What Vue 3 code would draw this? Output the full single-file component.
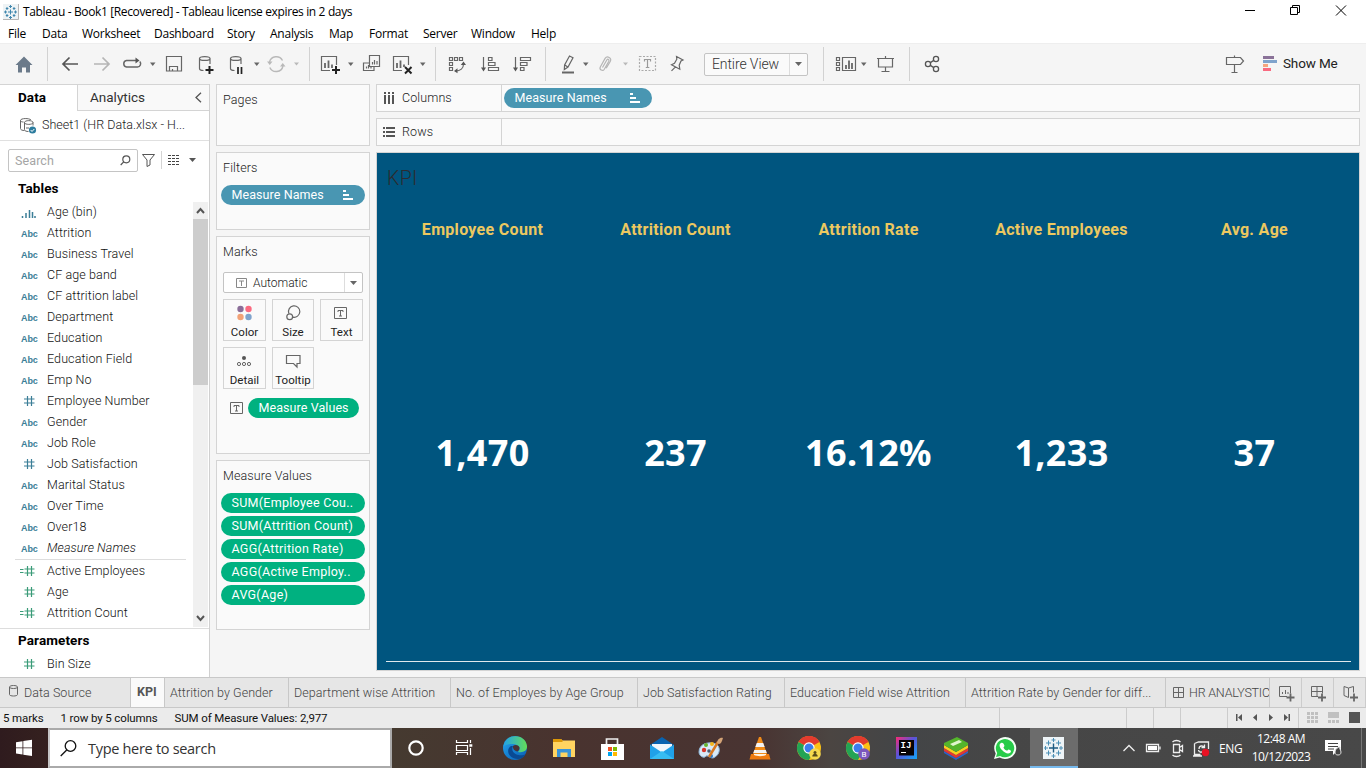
<script setup>
const menus = [
  { t: 'File', w: 34 }, { t: 'Data', w: 40 }, { t: 'Worksheet', w: 72 }, { t: 'Dashboard', w: 73 },
  { t: 'Story', w: 43 }, { t: 'Analysis', w: 59 }, { t: 'Map', w: 40 }, { t: 'Format', w: 54 },
  { t: 'Server', w: 48 }, { t: 'Window', w: 60 }, { t: 'Help', w: 40 },
]
const dims = [
  ['bin', 'Age (bin)'], ['abc', 'Attrition'], ['abc', 'Business Travel'], ['abc', 'CF age band'],
  ['abc', 'CF attrition label'], ['abc', 'Department'], ['abc', 'Education'], ['abc', 'Education Field'],
  ['abc', 'Emp No'], ['num', 'Employee Number'], ['abc', 'Gender'], ['abc', 'Job Role'],
  ['num', 'Job Satisfaction'], ['abc', 'Marital Status'], ['abc', 'Over Time'], ['abc', 'Over18'],
  ['abc', 'Measure Names', true],
]
const measures = [['calc', 'Active Employees'], ['mnum', 'Age'], ['calc', 'Attrition Count']]
const values = ['SUM(Employee Cou..', 'SUM(Attrition Count)', 'AGG(Attrition Rate)', 'AGG(Active Employ..', 'AVG(Age)']
const kpis = [
  ['Employee Count', '1,470'], ['Attrition Count', '237'], ['Attrition Rate', '16.12%'],
  ['Active Employees', '1,233'], ['Avg. Age', '37'],
]
const sheets = [
  { t: 'Attrition by Gender', w: 124 }, { t: 'Department wise Attrition', w: 162 },
  { t: 'No. of Employes by Age Group', w: 187 }, { t: 'Job Satisfaction Rating', w: 147 },
  { t: 'Education Field wise Attrition', w: 181 }, { t: 'Attrition Rate by Gender for diff...', w: 200 },
]
</script>

<template>
  <div class="window">
    <header class="titlebar">
      <svg class="logo" width="16" height="16" viewBox="0 0 16 16">
        <rect width="16" height="16" fill="#eef3f5" /><path d="M15.5 0v15.5H0" fill="none" stroke="#b5b5b5" />
        <path d="M7.5 5.5v5M5 8h5M7.5 1v3M6 2.5h3M7.5 12v3M6 13.5h3M1 8h3M2.5 6.5v3M11 8h3M12.5 6.5v3M4 3v3M2.8 4.5h2.6M11 3v3M9.8 4.5h2.6M4 10v3M2.8 11.5h2.6M11 10v3M9.8 11.5h2.6" stroke="#3f86ad" fill="none" />
      </svg>
      <span class="title">Tableau - Book1 [Recovered] - Tableau license expires in 2 days</span>
      <svg class="winctl" width="110" height="23" viewBox="1240 0 110 23" fill="none" stroke="#000">
        <path d="M1245 10.5h10" /><path d="M1290.500 7.500h7v7h-7zM1292.500 7v-1.500h7v7h-1.500" /><path d="M1336 5.500l10 10M1346 5.500l-10 10" />
      </svg>
    </header>
    <nav class="menubar"><span v-for="m in menus" :key="m.t" :style="{ width: m.w + 'px' }">{{ m.t }}</span></nav>

    <div class="toolbar">
      <svg width="47" height="40" viewBox="0 44 47 40"><path d="M24 56.500l8.500 8.500h-2.500v7.500h-4v-5h-4v5h-4V65h-2.500z" fill="#6b7a8a" /></svg>
      <i class="sep"></i>
      <svg width="261" height="40" viewBox="48 44 261 40" fill="none" stroke="#666" stroke-width="1.200">
        <path d="M63 64h15M69.500 57.500L63 64l6.500 6.500" stroke="#555" stroke-width="1.700" />
        <path d="M94 64h15M102.500 57.500L109 64l-6.500 6.500" stroke="#b5b5b5" stroke-width="1.700" />
        <path d="M137 60.500h-10.500a3.300 3.300 0 0 0 0 6.500h11a3.300 3.300 0 0 0 2.300-5.500" stroke-width="1.500" />
        <path d="M135.500 57.500l4 3-4 3z" fill="#555" stroke="none" />
        <path d="M150 62.500h5.500l-2.750 3.500z" fill="#666" stroke="none" />
        <path d="M166.500 56.500h15v14.500h-15zM169.500 71v-4.500h8v4.500M172.500 71v-2" />
        <path d="M210 64v-6M199.500 58.500v10c0 1.500 2 2 4 2M199.500 58.500c0-2.600 10.500-2.600 10.500 0s-10.500 2.600-10.500 0" />
        <path d="M209.500 66v8M205.500 70h8" stroke="#222" stroke-width="2" />
        <path d="M241 64v-6M230.500 58.500v10c0 1.500 2 2 4 2M230.500 58.500c0-2.600 10.500-2.600 10.500 0s-10.500 2.600-10.500 0" />
        <path d="M238 67v7M241.500 67v7" stroke="#222" stroke-width="1.700" />
        <path d="M254 62.500h5.500l-2.750 3.500z" fill="#666" stroke="none" />
        <g stroke="#b9b9b9" stroke-width="1.400"><path d="M269.500 62a7 7 0 0 1 13-1.500M283 66a7 7 0 0 1-13.200 1.500" /><path d="M267 61.500h5.500l-2.750 3.500zM280 66.500h5.500l-2.750-3.500z" fill="#b9b9b9" stroke="none" /></g>
        <path d="M294 62.500h5l-2.500 3z" fill="#b9b9b9" stroke="none" />
      </svg>
      <i class="sep"></i>
      <svg width="125" height="40" viewBox="310 44 125 40" fill="none" stroke="#666" stroke-width="1.200">
        <path d="M330 70.500h-8.500v-14h15v8.500" /><path d="M325 63v5M328.500 60.500v7.500M332 64.500V68" stroke-width="1.800" /><path d="M336 66v8M332 70h8" stroke="#222" stroke-width="2" />
        <path d="M348 62.500h5.500l-2.750 3.500z" fill="#666" stroke="none" />
        <path d="M369.500 63h-6v7.500h10.500v-4M369.500 55.500h10v11h-10z" /><path d="M366.500 66.500v2M368.500 65v3.500M371 67v1.500M372.500 62v2.500M374.500 60v4.500M377 61v3.500" />
        <path d="M402 70.500h-8.500v-14h15v8.500" /><path d="M397 63v5M400.500 60.500v7.500M404 64.500V67" stroke-width="1.800" /><path d="M405 67l6.500 6.500M411.500 67l-6.500 6.500" stroke="#222" stroke-width="2" />
        <path d="M420 62.500h5.500l-2.750 3.500z" fill="#666" stroke="none" />
      </svg>
      <i class="sep"></i>
      <svg width="109" height="40" viewBox="436 44 109 40" fill="none" stroke="#666" stroke-width="1.200">
        <path d="M449.500 57.500h3v3h-3zM454.500 57.500h3v3h-3zM459.500 57.500h3v3h-3zM449.500 62.500h3v3h-3zM449.500 67.500h3v3h-3zM463.500 64c0 4-3 7-8 7" />
        <path d="M460.800 65l2.700-3.500 2.500 3.500zM457.500 68.300v5L454 71z" fill="#555" stroke="none" />
        <path d="M483.500 57v12M488.500 57.500h3.500v3h-3.500zM488.500 62.500h6.500v3h-6.500zM488.500 67.500h10v3h-10z" /><path d="M481 67.500h5l-2.500 4z" fill="#555" stroke="none" />
        <path d="M515.500 57v12M520.500 57.500h10v3h-10zM520.500 62.500h6.500v3h-6.500zM520.500 67.500h3.500v3h-3.500z" /><path d="M513 67.500h5l-2.500 4z" fill="#555" stroke="none" />
      </svg>
      <i class="sep"></i>
      <svg width="158" height="40" viewBox="546 44 158 40" fill="none" stroke="#666" stroke-width="1.200">
        <path d="M569.500 56l3.500 1.700-5 9.300-3.700 2.500.3-4.500zM564.800 65l3 2" /><path d="M562 72.500h12" stroke-width="2" />
        <path d="M583 62.500h5.500l-2.750 3.500z" fill="#666" stroke="none" />
        <path d="M602.500 67.500l4.300-7.500c1-1.500 2.800-.4 2 1.200l-4.500 8c-1.500 2.500-5.300.5-4-2.300l4.800-8.500c2-3 7-.5 5.300 2.800l-4.200 7" stroke="#b5b5b5" />
        <path d="M623 62.500h5l-2.500 3z" fill="#b9b9b9" stroke="none" />
        <path d="M639.500 56.500h16v14h-16z" stroke="#aaa" stroke-dasharray="2 1.500" /><path d="M644.500 61.500v-2h6v2M647.500 59.500v8M645.800 67.500h3.500" stroke="#999" />
        <path d="M676.500 56.500l6.500 3.500-2 1-1.800 4.200.6 4-8.300-4.500 3-1.500 2.300-4zM675.500 66.800l-4 4" />
      </svg>
      <div class="combo"><span>Entire View</span><b><svg width="7" height="4"><path d="M0 0h7l-3.500 4z" fill="#666" /></svg></b></div>
      <i class="sep gap15"></i>
      <svg width="85" height="40" viewBox="824 44 85 40" fill="none" stroke="#666" stroke-width="1.200">
        <path d="M836.500 57.500h3v3h-3zM836.500 62.500h3v3h-3zM836.500 67.500h3v3h-3zM842.500 57.500h13v13h-13z" /><path d="M846 65v4M849 60.500V69M852 63v6" stroke-width="1.800" />
        <path d="M861 62.500h5.500l-2.750 3.500z" fill="#666" stroke="none" />
        <path d="M877 58.500h17M878.500 58.500v8.500h14v-8.500M885.500 56v2M885.500 67v4M881.500 71.500h8" />
      </svg>
      <i class="sep"></i>
      <svg width="40" height="40" viewBox="910 44 40 40" fill="none" stroke="#555" stroke-width="1.300">
        <circle cx="928" cy="64" r="2.600" /><circle cx="936" cy="59" r="2.600" /><circle cx="936" cy="69" r="2.600" /><path d="M930.300 62.600l3.500-2.200M930.300 65.400l3.500 2.200" />
      </svg>
      <div class="showme">
        <svg width="60" height="40" viewBox="1220 44 60 40"><path d="M1226.500 57.500h14l3 3.500-3 3.500h-14zM1234.500 55.500v2M1234.500 65v7.500M1231.500 72.500h6" fill="none" stroke="#666" stroke-width="1.200" /><path d="M1263 56h11v3h-11z" fill="#8a7298" /><path d="M1263 60h14v3h-14z" fill="#7fa3cc" /><path d="M1263 64h5v3h-5z" fill="#f5a57e" /><path d="M1263 68h8v3h-8z" fill="#f96a80" /></svg>
        <span>Show Me</span>
      </div>
    </div>

    <main class="work">
      <aside class="data">
        <div class="tabs"><b>Data</b><span>Analytics<svg width="7" height="11"><path d="M6 .7L1 5.500l5 4.800" fill="none" stroke="#555" stroke-width="1.300" /></svg></span></div>
        <div class="source">
          <svg width="18" height="18" viewBox="19 116 18 18" fill="none" stroke="#666"><path d="M20.500 119.500v8c0 1.500 2 2 4 2M20.500 119.500c0-2.500 9-2.500 10.500-.5M20.500 119.500c0 1 1.500 1.500 3 1.500M24.500 121.500v7c0 1.500 2 2 4 2M24.500 121.500c0-2.500 8.500-2.500 8.500 0s-8.500 2.500-8.500 0M33 121.500v3M26 127h3" /><circle cx="32.500" cy="129" r="3.600" fill="#2c7c9e" stroke="none" /><path d="M30.700 129l1.300 1.500 2.300-2.500" stroke="#fff" /></svg>
          <span>Sheet1 (HR Data.xlsx - H...</span>
        </div>
        <div class="searchrow">
          <div class="search"><span>Search</span><svg width="11" height="11" fill="none" stroke="#555" stroke-width="1.200"><circle cx="6.300" cy="4.300" r="3.500" /><path d="M3.700 6.800L.7 10" /></svg></div>
          <svg width="60" height="22" viewBox="139 149 60 22" fill="none" stroke="#555"><path d="M142.500 154.500h12l-4.500 5.500v5l-3 1.500v-6.500z" /><path d="M161.500 151v18" stroke="#d4d4d4" /><path d="M168 155.500h12M168 158.500h12M168 161.500h12M168 164.500h12" stroke-dasharray="3 1" stroke="#444" /><path d="M189 158h7l-3.500 4z" fill="#555" stroke="none" /></svg>
        </div>
        <h3>Tables</h3>
        <div class="fields">
          <div class="list">
            <div v-for="d in dims" :key="d[1]" class="row" :class="{ it: d[2] }">
              <em v-if="d[0] === 'abc'">Abc</em>
              <svg v-else-if="d[0] === 'bin'" width="16" height="12" stroke="#3b7e97" stroke-width="1.500"><path d="M1.500 12v-2M5 12V7M8.500 12V4M11.500 12V6M14 12v-2" /></svg>
              <svg v-else width="16" height="12" stroke="#3b7e97" stroke-width="1.200"><path d="M6.500 1v10M10.500 1v10M3 4h10.500M3 8h10.500" /></svg>
              <span>{{ d[1] }}</span>
            </div>
            <hr />
            <div v-for="d in measures" :key="d[1]" class="row">
              <svg width="16" height="12" stroke="#3a9b78" stroke-width="1.200"><path d="M6.500 1v10M10.500 1v10M3.500 4h10M3.500 8h10" /><path v-if="d[0] === 'calc'" d="M-1 4.500h3.500M-1 7.500h3.500" /></svg>
              <span>{{ d[1] }}</span>
            </div>
          </div>
          <div class="scroll"><svg width="15" height="17"><path d="M4 11l3.500-4 3.500 4" fill="none" stroke="#555" stroke-width="2" /></svg><i></i><svg width="15" height="17"><path d="M4 6l3.500 4L11 6" fill="none" stroke="#555" stroke-width="2" /></svg></div>
        </div>
        <div class="params">
          <h3>Parameters</h3>
          <div class="row"><svg width="16" height="12" stroke="#3a9b78" stroke-width="1.200"><path d="M6.500 1v10M10.500 1v10M3 4h10.500M3 8h10.500" /></svg><span>Bin Size</span></div>
        </div>
      </aside>

      <section class="cards">
        <div class="card pages"><h4>Pages</h4></div>
        <div class="card filters"><h4>Filters</h4><div class="pill blue"><span>Measure Names</span><svg width="11" height="10" fill="#fff"><path d="M0 0h3v2H0zM0 4h6v2H0zM0 8h10v2H0z" /></svg></div></div>
        <div class="card marks">
          <h4>Marks</h4>
          <div class="mtype"><svg width="11" height="10" fill="none" stroke="#888"><path d="M.5.5h10v9H.5zM3 3h5M5.500 3v5" /></svg><span>Automatic</span><b><svg width="7" height="4"><path d="M0 0h7l-3.500 4z" fill="#666" /></svg></b></div>
          <div class="btns">
            <div><svg width="42" height="22"><circle cx="16.500" cy="9" r="3.200" fill="#8a6d98" /><circle cx="24.500" cy="9" r="3.200" fill="#fb6a80" /><circle cx="16.500" cy="17" r="3.200" fill="#f2a277" /><circle cx="24.500" cy="17" r="3.200" fill="#7fa3cc" /></svg><span>Color</span></div>
            <div><svg width="42" height="22" fill="none" stroke="#666" stroke-width="1.200"><path d="M15.800 13.500a5.700 5.700 0 1 1 4 3.600" /><circle cx="16.700" cy="16.800" r="2.900" /></svg><span>Size</span></div>
            <div><svg width="42" height="22" fill="none" stroke="#666"><path d="M13.500 7.500h12v11h-12zM17 12v-1.500h5V12M19.500 10.500v5.500M18 16h3" /></svg><span>Text</span></div>
            <div><svg width="42" height="22" fill="none" stroke="#666"><circle cx="20" cy="10" r="2" fill="#555" stroke="none" /><circle cx="15" cy="16" r="1.600" /><circle cx="20" cy="16" r="1.600" /><circle cx="25" cy="16" r="1.600" /></svg><span>Detail</span></div>
            <div><svg width="42" height="22" fill="none" stroke="#666" stroke-width="1.200"><path d="M13.500 7.500h13.500v8h-3v3.500l-3.500-3.500h-7z" /></svg><span>Tooltip</span></div>
          </div>
          <div class="mline"><svg width="13" height="12" fill="none" stroke="#666"><path d="M.5.5h12v11H.5zM4 5V3.500h5V5M6.500 3.500V9M5 9h3" /></svg><div class="pill green"><span>Measure Values</span></div></div>
        </div>
        <div class="card mv"><h4>Measure Values</h4><div v-for="v in values" :key="v" class="pill green"><span>{{ v }}</span></div></div>
      </section>

      <section class="canvas">
        <div class="shelf"><label><svg width="12" height="12" fill="#555"><path d="M1 0h2v2H1zM5 0h2v2H5zM9 0h2v2H9zM1 3h2v9H1zM5 3h2v9H5zM9 3h2v9H9z" /></svg><span>Columns</span></label><div class="pill blue"><span>Measure Names</span><svg width="11" height="10" fill="#fff"><path d="M0 0h3v2H0zM0 4h6v2H0zM0 8h10v2H0z" /></svg></div></div>
        <div class="shelf"><label><svg width="12" height="12" fill="#555"><path d="M0 1h2v2H0zM3 1h9v2H3zM0 5h2v2H0zM3 5h9v2H3zM0 9h2v2H0zM3 9h9v2H3z" /></svg><span>Rows</span></label></div>
        <div class="view">
          <h2>KPI</h2>
          <div class="grid"><div v-for="k in kpis" :key="k[0]"><h5>{{ k[0] }}</h5><strong>{{ k[1] }}</strong></div></div>
        </div>
      </section>
    </main>

    <div class="sheets">
      <div class="tab src"><svg width="10" height="12" fill="none" stroke="#666"><path d="M.5 2v7.500c0 2 8 2 8 0V2M.5 2c0-2 8-2 8 0s-8 2-8 0" /></svg>Data Source</div>
      <div class="tab on">KPI</div>
      <div v-for="s in sheets" :key="s.t" class="tab" :style="{ width: s.w + 'px' }">{{ s.t }}</div>
      <div class="tab hr"><svg width="11" height="11" fill="none" stroke="#666"><path d="M.5.500h10v10H.500zM5.500.500v10M.500 5.500h10" /></svg>HR ANALYSTIC</div>
      <svg class="add" width="96" height="29" viewBox="1270 678 96 29" fill="none" stroke="#666"><path d="M1287 696.500h-7.500v-10h11v7M1282.500 692v2M1285.500 690v4M1288 692v2" /><path d="M1286.500 697.500h8M1290.500 693.500v8M1318 697.500h8M1322 693.500v8M1350 697.500h8M1354 693.500v8" stroke-width="1.800" /><path d="M1318 696.500h-6.500v-10h11v7M1311.500 691.500h11M1317 686.500v10" /><path d="M1348.500 688l-4.500-1.500v9l4.500 2v-9.500l5-1.500v6" /><path d="M1301.500 678v29M1333.500 678v29M1365.500 678v29" stroke="#ccc" /></svg>
    </div>
    <div class="status">
      <span>5 marks</span><span>1 row by 5 columns</span><span>SUM of Measure Values: 2,977</span>
      <svg width="376" height="20" viewBox="990 708 376 20" fill="#555"><path d="M999.500 708v20M1126.500 708v20M1153.500 708v20M1180.500 708v20M1227.500 708v20M1298.500 708v20" stroke="#ccc" /><path d="M1236 714h1.500v7h-1.500zM1242 714v7l-4-3.500zM1257 714v7l-4-3.500zM1269 714v7l4-3.500zM1284 714v7l4-3.500zM1288.500 714h1.500v7h-1.500z" /><path d="M1307 712h3v3h-3zM1311 712h3v3h-3zM1315 712h3v3h-3zM1307 716h3v3h-3zM1311 716h3v3h-3zM1315 716h3v3h-3zM1307 720h3v3h-3zM1311 720h3v3h-3zM1315 720h3v3h-3zM1328 712h11v6h-11zM1328 720h3v3h-3zM1332 720h3v3h-3zM1336 720h3v3h-3z" fill="#c0c0c0" /><path d="M1349 712h11v11h-11z" /></svg>
    </div>

    <footer class="taskbar">
      <svg width="48" height="40" viewBox="0 728 48 40" fill="#fff"><path d="M16 742.200l6.500-1v6.300H16zM23.300 741l8.700-1.200v7.700h-8.700zM16 748.300h6.500v6.300l-6.500-1zM23.300 748.300h8.700v7.700l-8.700-1.200z" /></svg>
      <div class="tsearch"><svg width="17" height="17" fill="none" stroke="#111" stroke-width="1.300"><circle cx="10.500" cy="6" r="5.300" /><path d="M6.700 10L.7 16" /></svg><span>Type here to search</span></div>
      <svg class="apps" width="728" height="40" viewBox="392 728 728 40">
        <defs>
          <linearGradient id="edge" x1="0" y1="0" x2="1" y2="1"><stop offset="0" stop-color="#2ba8e8" /><stop offset=".5" stop-color="#1480d2" /><stop offset="1" stop-color="#0d5cae" /></linearGradient>
          <linearGradient id="edge2"><stop offset="0" stop-color="#22a3e8" /><stop offset="1" stop-color="#63dc58" /></linearGradient>
          <linearGradient id="ij" x1="0" y1="0" x2="1" y2="1"><stop offset="0" stop-color="#fc2a75" /><stop offset=".45" stop-color="#5a53d8" /><stop offset="1" stop-color="#11a7fa" /></linearGradient>
          <g id="chrome"><circle r="12" fill="#fbc116" /><path d="M0 0L-10.400-6A12 12 0 0 1 10.400-6z" fill="#e33b2e" /><path d="M0 0L-10.400-6A12 12 0 0 0 0 12L5 3z" fill="#23a455" /><path d="M-1-6h11.400a12 12 0 0 0-20.800 0z" fill="#e33b2e" /><circle r="5.700" fill="#fff" /><circle r="4.500" fill="#3b7ded" /></g>
        </defs>
        <circle cx="416" cy="748" r="6.700" fill="none" stroke="#fff" stroke-width="2.200" />
        <g fill="none" stroke="#fff" stroke-width="1.200"><path d="M456.500 740v2.500h11V740M456.500 755v-2.500h11V755M456.500 745.500h11v5h-11zM470.500 740v3M470.500 748v7" /><path d="M469.300 745.500h3" stroke-width="2.500" /></g>
        <circle cx="515" cy="748" r="12" fill="url(#edge)" /><path d="M503.500 746c2-13 22-13 23.500 0 .4 5-4 7-9 6 1-1 2-2 1.500-4-1.500-5-10-5-16-2z" fill="url(#edge2)" /><path d="M511 746c-6 4-2 13 7 13 3 0 6-2 7.500-4.500-3 1.500-11 1.500-13-4-.5-2 0-3.500.5-4.500z" fill="#0a4a93" /><path d="M513 746c2-2 6-1 6.500 1.500.2 2-1 3-2 4-2-.5-5-2-4.500-5.500z" fill="#493334" />
        <path d="M553 739h8l1.500 1.500H575V757h-22z" fill="#ffd461" /><path d="M553 739h8l1.500 1.500v1.500H553z" fill="#dd9807" /><path d="M557 757v-8h14v8h-3.500v-4.500h-7v4.500z" fill="#3994d8" />
        <path d="M606.500 745v-6h11v6" fill="none" stroke="#eee" stroke-width="1.700" /><path d="M601 744h23v16h-23z" fill="#fff" /><path d="M608 747h4v4h-4z" fill="#f25022" /><path d="M613 747h4v4h-4z" fill="#7fba00" /><path d="M608 752h4v4h-4z" fill="#00a4ef" /><path d="M613 752h4v4h-4z" fill="#ffb900" />
        <path d="M650 745l12-8 12 8z" fill="#0863b0" /><path d="M652 744h20v10h-20z" fill="#eef6fc" /><path d="M650 744.500V759h24v-14.500l-12 8z" fill="#20a1e8" /><path d="M650 759l12-8 12 8z" fill="#37bcf2" />
        <path d="M699 752c0-8 9-11 17-8 5 3 4 10-1 13-4 3-6-2-9-1-2 3-7 0-7-4z" fill="#d8e9f7" stroke="#8db7da" /><circle cx="704" cy="750" r="2.200" fill="#d8372c" /><circle cx="706" cy="745" r="2" fill="#65b32e" /><circle cx="712" cy="744" r="2" fill="#f4b51c" /><circle cx="709" cy="751" r="1.800" fill="#475b70" /><circle cx="711" cy="756" r="2" fill="#2979cc" /><path d="M709 757l9-15" stroke="#d87820" stroke-width="2.500" /><path d="M717 743c0-3 3-6 6-5-1 3-2 6-4 6z" fill="#d4a477" />
        <path d="M759 737h2l6 17h-14z" fill="#f18b18" /><path d="M756.800 743h6.400l1.500 4h-9.400zM754.300 750h11.500l1 3h-13.500z" fill="#f3f3f3" /><path d="M751 754h18l1.500 5.500h-21z" fill="#ee7b10" /><path d="M754 754h12v1c-3 1.500-9 1.500-12 0z" fill="#fff2df" />
        <use href="#chrome" x="809" y="748" /><circle cx="815" cy="754" r="5.800" fill="#f6d94e" /><path d="M812.300 756.500c0-2 1.200-2.500 2.700-2.500s2.700.5 2.700 2.500z" fill="#594b1a" /><circle cx="815" cy="752.500" r="1.500" fill="#594b1a" />
        <use href="#chrome" x="858" y="748" /><circle cx="864" cy="754" r="5.800" fill="#7b57bd" /><text x="864" y="757" text-anchor="middle" font-size="8" fill="#fff">B</text>
        <path d="M896 737h21v22h-21z" fill="url(#ij)" /><path d="M899 740h15v15.500h-15z" fill="#080306" /><text x="900.500" y="748" font-family="Liberation Mono" font-size="9" font-weight="bold" fill="#fff">IJ</text><path d="M901 752.500h5" stroke="#fff" />
        <path d="M944 751l12 7 12-7v2l-12 7-12-7z" fill="#2a63c8" /><path d="M944 748l12 7 12-7v3l-12 7-12-7z" fill="#e23834" /><path d="M944 745l12 7 12-7v3l-12 7-12-7z" fill="#f8ce20" /><path d="M944 743l13-6 11 6v2l-12 7-12-7z" fill="#54b52b" /><path d="M950 744l9-4 3 2-9 4z" fill="#dff5cc" />
        <path d="M994 759l1.700-5.500a11 11 0 1 1 4 4z" fill="#f2fff4" /><path d="M996 757l1.200-4a9.200 9.200 0 1 1 3 3z" fill="#27cc49" /><path d="M1001 743c-2 1-2 4 1 7s6 4.500 8.500 2.500c.8-1 .5-2-.5-2.500s-1.800-.8-2.500.4c-.7 1-4-2-4-3 .8-.8 1.200-1.300.7-2.300-.5-1.200-1.200-2.800-3.200-2.100z" fill="#fff" />
        <path d="M1030 728h48v40h-48z" fill="#6c6c6c" /><path d="M1030 766h48v2h-48z" fill="#76b9ed" /><path d="M1043 737h21v22h-21z" fill="#eef4f7" />
        <path d="M1053.500 743.500v9M1049 748h9" stroke="#1c5b83" stroke-width="1.400" /><path d="M1053.500 738v4M1051.500 740h4M1053.500 754v4M1051.500 756h4M1045.500 746v4M1044 748h4M1061 746v4M1059 748h4M1048.500 740.500v5M1046 743h5M1058.500 740.500v5M1056 743h5M1048.500 750.500v5M1046 753h5M1058.500 750.500v5M1056 753h5" stroke="#4b8fb5" />
      </svg>
      <svg width="96" height="40" viewBox="1120 728 96 40" fill="none" stroke="#eee" stroke-width="1.300">
        <path d="M1123.500 751l5.500-5.500 5.500 5.500" /><path d="M1146.500 744.500h12v7h-12zM1160 746.500v3" /><path d="M1148 746h9v4h-9z" fill="#fff" stroke="none" />
        <path d="M1173.500 744.500h6v8h-6zM1179.500 747.500l3-2v6l-3-2M1172.500 742c2-2 6-2 8 0M1172.500 755c2 2 6 2 8 0" /><path d="M1194.500 743.500l4-1.500h10v7M1194.500 743.500v11h6M1193 756h9M1199 749c0-4 5-4 5-1M1204.500 744.500v3h-3M1204 750c-1 3-5 3-5.500 0" /><circle cx="1205.500" cy="752.500" r="3.700" fill="#e81123" stroke="none" />
      </svg>
      <span class="eng">ENG</span>
      <div class="clock"><span>12:48 AM</span><span>10/12/2023</span></div>
      <svg width="46" height="40" viewBox="1320 728 46 40"><path d="M1325 740h16v11h-4l-4 4v-4h-8z" fill="#fff" /><path d="M1328 743.500h10M1328 746.500h10M1328 749h6" stroke="#444" /><path d="M1335 752c0-3 3-5 5-5-1 2 1 3 1 5s-1 3-3 3-3-1-3-3z" fill="#444" stroke="#ddd" /><path d="M1361.500 728v40" stroke="#777" /></svg>
    </footer>
  </div>
</template>

<style>
body { margin: 0; overflow: hidden; }
</style>
<style scoped>
* { box-sizing: border-box; }
.window { width: 1366px; height: 768px; display: flex; flex-direction: column; background: #fff; font: 12.5px/1 Roboto, "Liberation Sans", sans-serif; color: #333; white-space: nowrap; overflow: hidden; }
svg { display: block; flex: none; }
h2, h3, h4, h5, hr { margin: 0; }
.titlebar { height: 23px; display: flex; align-items: center; padding-left: 3px; font: 12px "Open Sans", sans-serif; color: #000; }
.title { margin-left: 4px; letter-spacing: -.36px; }
.winctl { margin-left: auto; margin-right: 16px; }
.menubar { height: 20px; display: flex; align-items: center; padding-left: 8px; font: 12px "Open Sans", sans-serif; letter-spacing: -.24px; color: #000; }
.toolbar { height: 41px; border-top: 1px solid #eee; background: #f5f5f5; display: flex; align-items: center; flex: none; }
.sep { width: 1px; height: 34px; background: #d2d2d2; flex: none; }
.gap15 { margin-left: 15px; }
.combo { width: 104px; height: 23px; border: 1px solid #c4c4c4; border-radius: 2px; background: #fafafa; display: flex; align-items: center; font-size: 14px; color: #333; padding-left: 7px; font-weight: 300; letter-spacing: -.1px; }
.combo b, .mtype b { margin-left: auto; width: 18px; height: 100%; border-left: 1px solid #ddd; display: grid; place-items: center; }
.showme { margin-left: auto; display: flex; align-items: center; width: 146px; gap: 3px; font-size: 13.5px; letter-spacing: -.15px; color: #222; }
.work { height: 593px; flex: none; display: flex; background: #f5f5f5; }
.data { width: 210px; border-right: 1px solid #d0d0d0; background: #fff; }
.tabs { height: 27px; display: flex; font-size: 13.5px; border-top: 1px solid #d4d4d4; }
.tabs b { width: 77px; padding: 6px 0 0 18px; color: #000; letter-spacing: .1px; }
.tabs span { flex: 1; border: solid #d4d4d4; border-width: 0 0 1px 1px; background: #f9f9f9; display: flex; align-items: center; justify-content: space-between; padding: 0 7px 0 12px; letter-spacing: 0; }
.source { height: 30px; border-bottom: 1px solid #e0e0e0; display: flex; align-items: center; padding-left: 19px; gap: 5px; font-weight: 300; letter-spacing: .02px; color: #222; }
.searchrow { height: 38px; padding: 8px 0 0 8px; display: flex; gap: 1px; }
.search { width: 130px; height: 23px; border: 1px solid #c4c4c4; border-radius: 2px; display: flex; align-items: center; justify-content: space-between; padding: 0 6px; color: #a5a5a5; letter-spacing: .1px; }
.search span { padding-top: 2px; }
h3 { font-size: 13.5px; font-weight: 700; color: #000; height: 22px; padding: 3px 0 0 18px; letter-spacing: .1px; }
.fields { display: flex; height: 427px; padding-top: 1px; }
.list { width: 193px; }
.row { height: 21px; display: flex; align-items: center; padding: 0 0 2px 21px; gap: 10px; font-weight: 300; letter-spacing: .1px; color: #111; }
.row svg { overflow: visible; }
.row span { padding-top: 2px; }
.row em { width: 16px; font: 700 9px "Liberation Sans"; letter-spacing: -.1px; color: #3b7e97; padding-top: 2px; }
.it span { font-style: italic; }
hr { border: 0; border-top: 1px solid #ddd; margin: 0 7px 1px 15px; }
.scroll { width: 15px; background: #f0f0f0; display: flex; flex-direction: column; height: 425px; }
.scroll i { height: 166px; background: #cdcdcd; margin-bottom: auto; }
.params { height: 49px; border-top: 1px solid #ddd; padding-top: 3px; }
.params h3 { padding-top: 2px; }
.cards { width: 154px; margin-left: 6px; display: flex; flex-direction: column; gap: 6px; }
.card { border: 1px solid #d4d4d4; background: #fafafa; padding: 0 4px; color: #444; }
h4 { font-size: 12.5px; font-weight: 300; padding: 9px 2px 0; height: 32px; letter-spacing: .12px; color: #222; }
.pages { height: 62px; } .filters { height: 78px; } .marks { height: 218px; } .mv { height: 170px; }
.pill { height: 20px; border-radius: 10px; display: flex; align-items: center; justify-content: space-between; padding: 0 11px 0 10.5px; color: #fff; font-size: 12.5px; letter-spacing: .08px; }
.pill span { padding-top: 1px; }
.blue { background: #4996b2; } .green { background: #00b180; }
.mv .pill { margin-bottom: 3px; letter-spacing: .28px; }
.mtype { width: 140px; height: 21px; margin: 3px 0 6px 2px; border: 1px solid #c4c4c4; border-radius: 2px; display: flex; align-items: center; padding-left: 12px; gap: 6px; background: #fff; font-weight: 300; font-size: 12px; color: #222; }
.btns { display: grid; grid-template-columns: 43px 42px 43px; gap: 6px; margin-left: 2px; }
.btns div { height: 42px; border: 1px solid #d4d4d4; background: #fafafa; text-align: center; font-size: 11.500px; color: #222; letter-spacing: .02px; overflow: hidden; }
.btns span { display: block; margin-top: 5px; }
.mline { display: flex; align-items: center; margin: 9px 0 0 9px; gap: 5px; }
.mline .pill { width: 111px; }
.canvas { width: 984px; margin-left: 6px; display: flex; flex-direction: column; gap: 6px; }
.shelf { height: 28px; border: 1px solid #d4d4d4; background: #fafafa; display: flex; align-items: center; flex: none; }
.shelf label { width: 125px; height: 100%; border-right: 1px solid #d4d4d4; display: flex; align-items: center; gap: 7px; padding-left: 6px; font-weight: 300; letter-spacing: .1px; color: #222; }
.shelf label svg { margin-top: -1px; }
.shelf label span { padding-top: 1px; }
.shelf .pill { width: 148px; margin-left: 2px; }
.view { height: 519px; border: 1px solid #d4d4d4; background: #00557f; padding: 0 8px 0 9px; }
h2 { height: 58px; font-size: 19.5px; font-weight: 300; color: #2c2c30; padding: 16px 0 0 1px; letter-spacing: .4px; }
.grid { height: 451px; display: grid; grid-template-columns: repeat(5, 193px); border-bottom: 1px solid #dfe8ed; text-align: center; }
h5 { font: 700 16px/37px Roboto, sans-serif; color: #ecc860; height: 36px; letter-spacing: .3px; }
strong { display: block; padding-top: 181px; font: 700 36px/50px "Noto Sans", sans-serif; color: #fff; letter-spacing: .3px; }
.sheets { height: 31px; border: solid #c8c8c8; border-width: 1px 0; background: #e6e6e6; display: flex; color: #444; flex: none; }
.tab { border-right: 1px solid #c8c8c8; padding: 9px 0 0 5px; overflow: hidden; font-weight: 300; letter-spacing: .05px; flex: none; }
.src { width: 131px; display: flex; padding-left: 9px; gap: 5px; }
.src svg { margin-top: -2px; }
.on { width: 34px; background: #fafafa; font-weight: 700; color: #555; padding: 8px 0 0 6px; }
.hr { width: 104px; display: flex; gap: 5px; padding-left: 7px; letter-spacing: -.2px; }
.status { height: 20px; background: #ebebeb; display: flex; align-items: center; font-size: 11.5px; padding-left: 3px; gap: 17px; flex: none; color: #111; letter-spacing: -.12px; }
.status span { padding-top: 1px; }
.status svg { margin-left: auto; }
.taskbar { height: 40px; display: flex; flex: none; color: #fff; background: linear-gradient(90deg, #2f1b1e 0, #35211f 48px, #453a30 392px, #49332f 560px, #493432 760px, #4b4542 830px, #434547 900px, #464646 1000px, #484848 1366px); }
.tsearch { width: 344px; border: 2px solid #aaa; border-left-color: #c6c6c6; background: #fff; display: flex; align-items: center; padding-left: 10px; gap: 11px; font: 14.5px "Open Sans", sans-serif; color: #333; letter-spacing: -.3px; }
.apps { font-family: Roboto, sans-serif; }
.eng { width: 34px; padding: 14px 0 0 3px; font: 12px/13px "Open Sans", sans-serif; letter-spacing: -.4px; }
.clock { width: 70px; margin-left: -5px; margin-right: 5px; padding-left: 2px; text-align: center; display: grid; grid-template-rows: 18px 18px; padding-top: 2px; font: 12px/18px "Open Sans", sans-serif; letter-spacing: -.5px; }
</style>
